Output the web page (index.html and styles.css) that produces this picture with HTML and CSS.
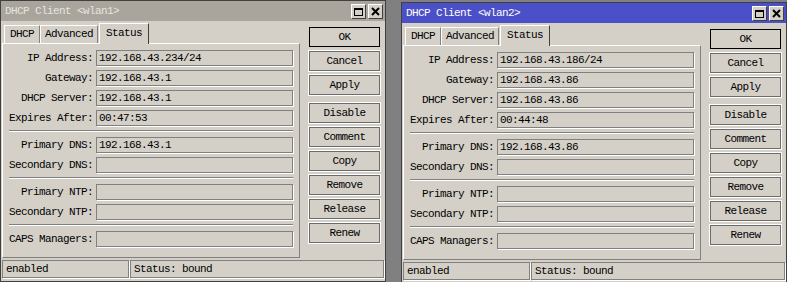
FILE: index.html
```html
<!DOCTYPE html>
<html lang="en">
<head>
    <meta charset="UTF-8">
    <title>DHCP Client</title>
    <link rel="stylesheet" href="styles.css">
</head>
<body>
    <div class="desk">
        <!-- wlan1, inactive window -->
        <div class="window">
            <div class="titlebar">
                <span class="title">DHCP Client &lt;wlan1&gt;</span>
                <span class="wbtns">
                    <span class="wbtn"><span class="max-icon"></span></span>
                    <span class="wbtn">
                        <svg width="9" height="9" viewBox="0 0 9 9"><path d="M1 1L8 8M8 1L1 8" stroke="#000" stroke-width="2"/></svg>
                    </span>
                </span>
            </div>
            <div class="main">
                <div class="left">
                    <div class="tabs">
                        <span class="tab">DHCP</span>
                        <span class="tab">Advanced</span>
                        <span class="tab selected">Status</span>
                    </div>
                    <div class="panel">
                        <div class="row"><span class="label">IP Address:</span><span class="field">192.168.43.234/24</span></div>
                        <div class="row"><span class="label">Gateway:</span><span class="field">192.168.43.1</span></div>
                        <div class="row"><span class="label">DHCP Server:</span><span class="field">192.168.43.1</span></div>
                        <div class="row"><span class="label">Expires After:</span><span class="field">00:47:53</span></div>
                        <div class="sep"></div>
                        <div class="row"><span class="label">Primary DNS:</span><span class="field">192.168.43.1</span></div>
                        <div class="row"><span class="label">Secondary DNS:</span><span class="field"></span></div>
                        <div class="sep"></div>
                        <div class="row"><span class="label">Primary NTP:</span><span class="field"></span></div>
                        <div class="row"><span class="label">Secondary NTP:</span><span class="field"></span></div>
                        <div class="sep"></div>
                        <div class="row"><span class="label">CAPS Managers:</span><span class="field"></span></div>
                    </div>
                </div>
                <div class="btns">
                    <span class="btn default">OK</span>
                    <span class="btn">Cancel</span>
                    <span class="btn group-end">Apply</span>
                    <span class="btn">Disable</span>
                    <span class="btn">Comment</span>
                    <span class="btn">Copy</span>
                    <span class="btn">Remove</span>
                    <span class="btn">Release</span>
                    <span class="btn">Renew</span>
                </div>
            </div>
            <div class="statusbar">
                <span class="sbox state">enabled</span>
                <span class="sbox info">Status: bound</span>
            </div>
        </div>

        <!-- wlan2, active window -->
        <div class="window active">
            <div class="titlebar">
                <span class="title">DHCP Client &lt;wlan2&gt;</span>
                <span class="wbtns">
                    <span class="wbtn"><span class="max-icon"></span></span>
                    <span class="wbtn">
                        <svg width="9" height="9" viewBox="0 0 9 9"><path d="M1 1L8 8M8 1L1 8" stroke="#000" stroke-width="2"/></svg>
                    </span>
                </span>
            </div>
            <div class="main">
                <div class="left">
                    <div class="tabs">
                        <span class="tab">DHCP</span>
                        <span class="tab">Advanced</span>
                        <span class="tab selected">Status</span>
                    </div>
                    <div class="panel">
                        <div class="row"><span class="label">IP Address:</span><span class="field">192.168.43.186/24</span></div>
                        <div class="row"><span class="label">Gateway:</span><span class="field">192.168.43.86</span></div>
                        <div class="row"><span class="label">DHCP Server:</span><span class="field">192.168.43.86</span></div>
                        <div class="row"><span class="label">Expires After:</span><span class="field">00:44:48</span></div>
                        <div class="sep"></div>
                        <div class="row"><span class="label">Primary DNS:</span><span class="field">192.168.43.86</span></div>
                        <div class="row"><span class="label">Secondary DNS:</span><span class="field"></span></div>
                        <div class="sep"></div>
                        <div class="row"><span class="label">Primary NTP:</span><span class="field"></span></div>
                        <div class="row"><span class="label">Secondary NTP:</span><span class="field"></span></div>
                        <div class="sep"></div>
                        <div class="row"><span class="label">CAPS Managers:</span><span class="field"></span></div>
                    </div>
                </div>
                <div class="btns">
                    <span class="btn default">OK</span>
                    <span class="btn">Cancel</span>
                    <span class="btn group-end">Apply</span>
                    <span class="btn">Disable</span>
                    <span class="btn">Comment</span>
                    <span class="btn">Copy</span>
                    <span class="btn">Remove</span>
                    <span class="btn">Release</span>
                    <span class="btn">Renew</span>
                </div>
            </div>
            <div class="statusbar">
                <span class="sbox state">enabled</span>
                <span class="sbox info">Status: bound</span>
            </div>
        </div>
    </div>
</body>
</html>
```

FILE: styles.css
```css
body {
    margin: 0;
    background-color: #808080;
    font-family: "Liberation Mono", "DejaVu Sans Mono", monospace;
    font-size: 11px;
    letter-spacing: -0.6px;
    color: #000;
}
.desk {
    display: flex;
    gap: 15px;
}
.window {
    flex: none;
    width: 386px;
    height: 282px;
    box-sizing: border-box;
    border: 1px solid #404040;
    background-color: #d4d0c8;
}
.window.active {
    margin-top: 2px;
}
.titlebar {
    height: 20px;
    display: flex;
    align-items: center;
    justify-content: space-between;
    padding: 0 2px 0 4px;
    background-color: #a9a59d; /* inactive grey */
    color: #e6e4de;
}
.active .titlebar {
    background-color: #4b4fc8; /* active blue */
    color: #fff;
}
.wbtns {
    display: flex;
    gap: 2px;
    padding-top: 1px;
}
.wbtn {
    width: 15px;
    height: 15px;
    box-sizing: border-box;
    border: 1px solid;
    border-color: #fff #404040 #404040 #fff;
    background-color: #d4d0c8;
    display: flex;
    align-items: center;
    justify-content: center;
}
.max-icon {
    width: 9px;
    height: 8px;
    box-sizing: border-box;
    border: 1px solid #000;
    border-top-width: 2px;
}
.main {
    display: flex;
    height: 237px;
    padding-left: 1px;
}
.left {
    width: 298px;
    display: flex;
    flex-direction: column;
}
.tabs {
    height: 22px;
    display: flex;
    align-items: flex-end;
    padding-left: 2px;
}
.tab {
    height: 18px;
    box-sizing: border-box;
    padding: 0 4px;
    line-height: 16px;
    border: 1px solid;
    border-bottom: none;
    border-color: #fff #808080 #fff #fff;
}
.tab:first-child {
    padding: 0 5px;
}
.tab.selected {
    position: relative;
    z-index: 1;
    height: 21px;
    margin: 0 0 -1px 1px;
    padding: 0 6px;
    line-height: 19px;
    border-right-color: #404040;
    background-color: #d4d0c8;
}
.panel {
    flex: 1;
    box-sizing: border-box;
    border: 1px solid;
    border-color: #fff #808080 #808080 #fff;
    padding: 6px 6px 0 0;
    display: flex;
    flex-direction: column;
    gap: 4px;
}
.row {
    display: flex;
    align-items: center;
    height: 16px;
}
.label {
    width: 90px;
    margin-right: 3px;
    text-align: right;
    white-space: nowrap;
}
.field {
    width: 197px;
    height: 16px;
    box-sizing: border-box;
    border: 1px solid #808080;
    box-shadow: 1px 1px 0 #fff;
    padding-left: 2px;
    line-height: 14px;
}
.sep {
    border-top: 1px solid #808080;
    border-bottom: 1px solid #fff;
    margin: 0 0 1px 6px;
}
.btns {
    display: flex;
    flex-direction: column;
    gap: 4px;
    padding-top: 6px;
    margin-left: 9px;
}
.btn {
    width: 71px;
    height: 20px;
    box-sizing: border-box;
    border: 1px solid #6c6c6c;
    box-shadow: 0 0 0 1px #fff;
    text-align: center;
    line-height: 18px;
}
.btn.default {
    border-color: #000;
    box-shadow: none;
}
.btn.group-end {
    margin-bottom: 4px;
}
.statusbar {
    display: flex;
    gap: 1px;
    padding: 2px 0 0 1px;
}
.sbox {
    height: 18px;
    box-sizing: border-box;
    border: 1px solid #808080;
    box-shadow: 1px 1px 0 #fff;
    padding-left: 3px;
    line-height: 16px;
}
.sbox.state {
    width: 127px;
}
.sbox.info {
    width: 254px;
}
```
